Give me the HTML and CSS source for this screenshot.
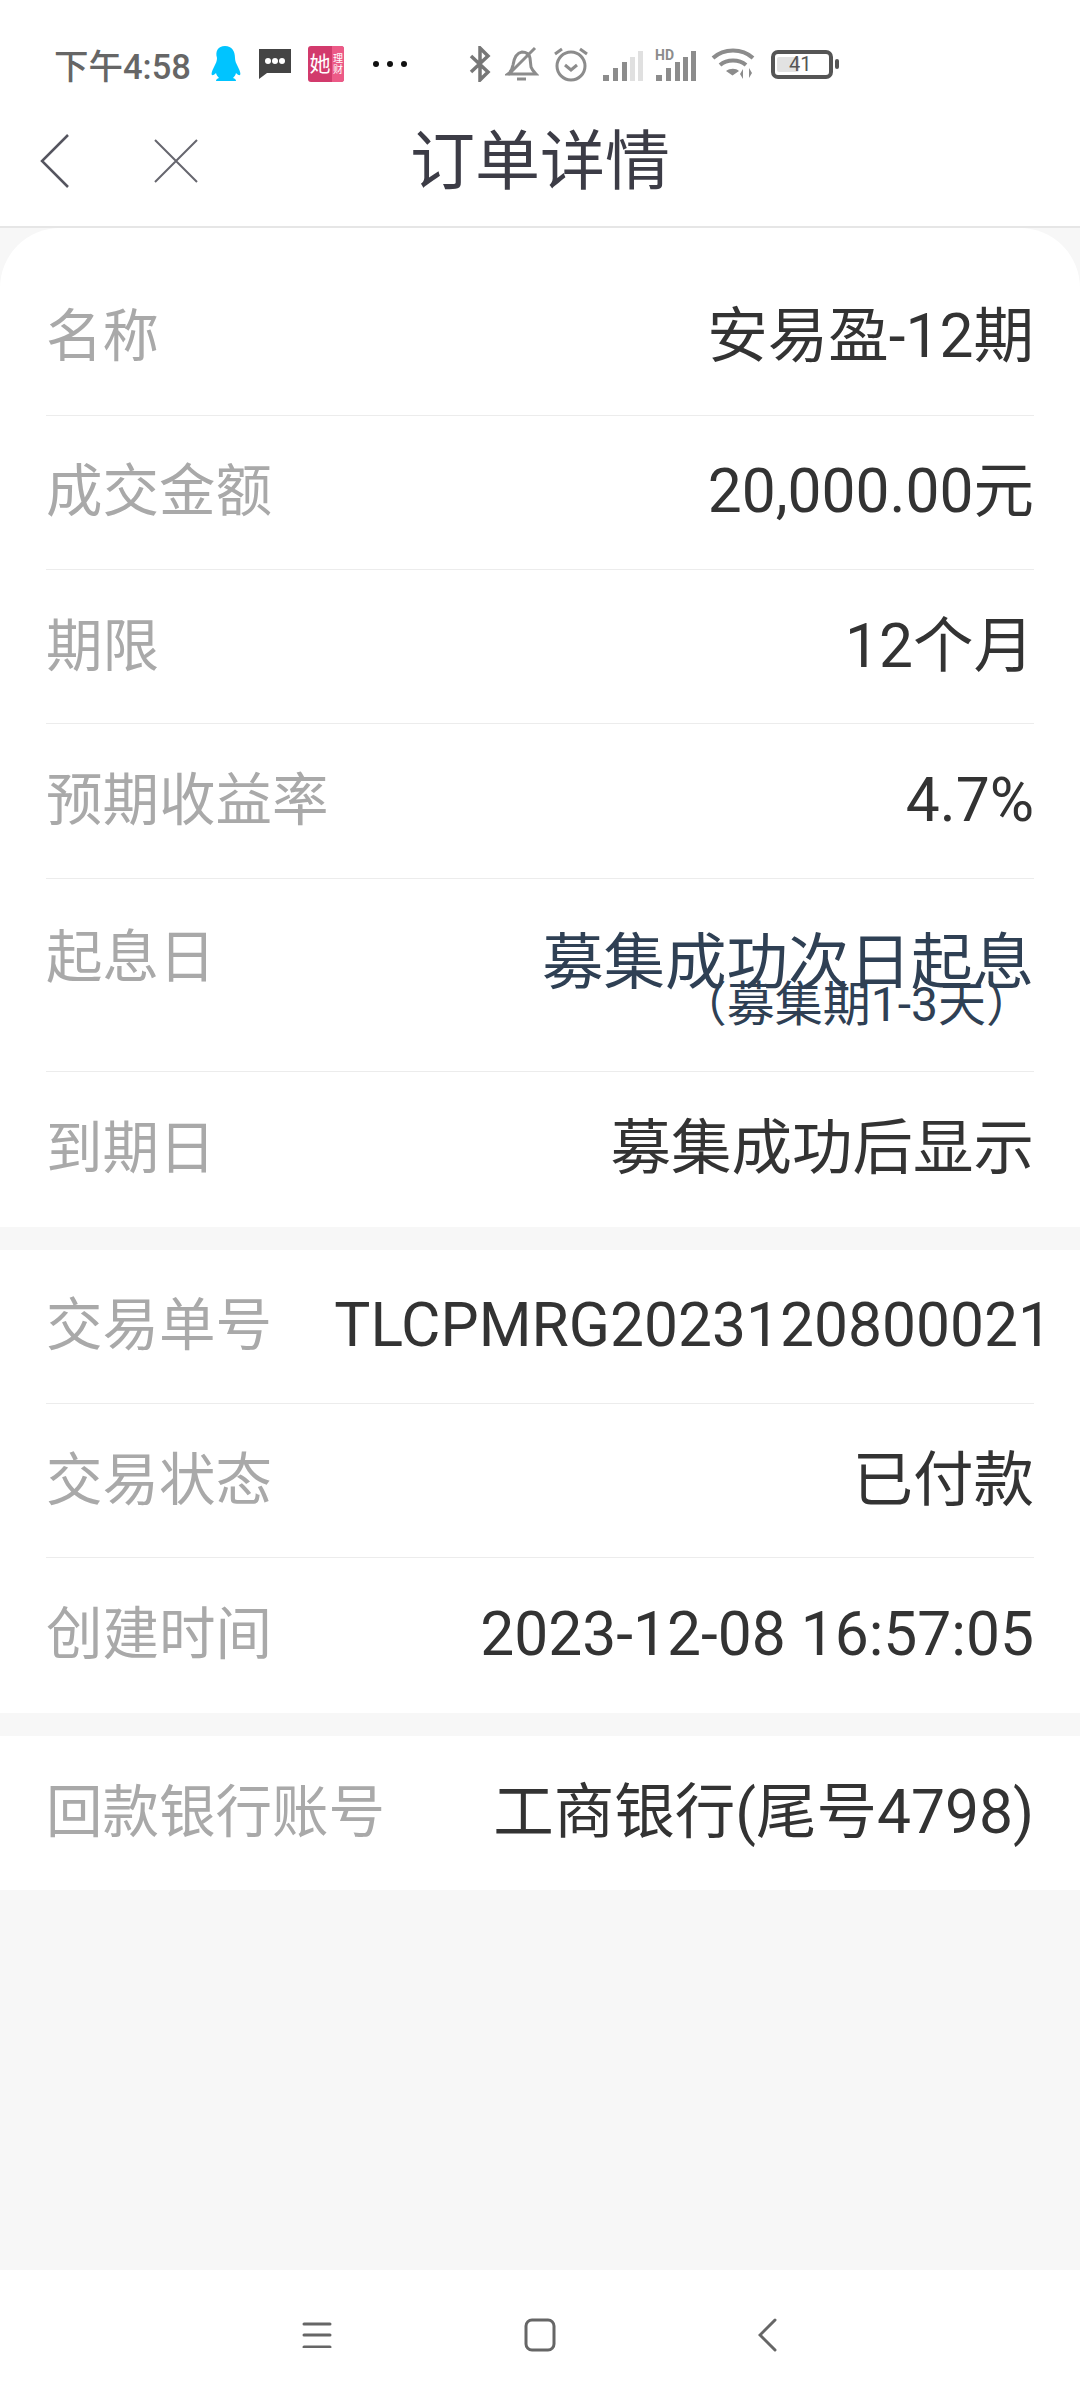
FILE: index.html
```html
<!DOCTYPE html>
<html lang="zh-CN">
<head>
<meta charset="utf-8">
<title>订单详情</title>
<link rel="stylesheet" href="styles.css">
</head>
<body>
<div class="screen">
  <header class="top">
    <div class="status">
      <span class="clock">下午4:58</span>
      <svg class="ic ic-qq" width="32" height="38" viewBox="0 0 32 38"><path fill="#00c4ff" d="M16 1c7 0 10 5 10 12 0 3 1 5 3 9 2 4 3 7 2 8-1 .6-3-1-4-2-.5 2-1.500 3.500-3 5 2 .5 3 1.500 3 3H7c0-1.500 1-2.500 3-3-1.500-1.500-2.500-3-3-5-1 1-3 2.600-4 2-1-1 0-4 2-8 2-4 3-6 3-9C6 6 9 1 16 1z"/></svg>
      <svg class="ic ic-msg" width="34" height="32" viewBox="0 0 34 32"><path fill="#444" d="M1 1h32v24H9l-8 6z"/><circle cx="10" cy="13" r="3" fill="#fff"/><circle cx="17" cy="13" r="3" fill="#fff"/><circle cx="24" cy="13" r="3" fill="#fff"/></svg>
      <span class="ic-she"><span class="she-a">她</span><span class="she-b">理<br>财</span></span>
      <span class="dots"><i></i><i></i><i></i></span>
      <svg class="ic ic-bt" width="22" height="36" viewBox="0 0 22 36"><path fill="none" stroke="#777" stroke-width="3.500" d="M2 10l17 16-8 8V2l8 8L2 26"/></svg>
      <svg class="ic ic-bell" width="34" height="36" viewBox="0 0 34 36"><path fill="none" stroke="#8c8c8c" stroke-width="3" d="M3 28c3-2 4-4 5-9 1-7 3-12 9-13 4 0 7 2 8 6l1 9c1 3 3 5 5 7zM3 29L30 2M12 33h9"/></svg>
      <svg class="ic ic-alarm" width="36" height="36" viewBox="0 0 36 36"><g fill="none" stroke="#8c8c8c" stroke-width="3"><circle cx="18" cy="20" r="14"/><path d="M12 19l6 5 6-5M2 8l7-5M34 8l-7-5"/></g></svg>
      <svg class="ic ic-sig1" width="40" height="30" viewBox="0 0 40 30"><rect x="0" y="24" width="6" height="6" fill="#8c8c8c"/><rect x="10" y="17" width="5" height="13" fill="#8c8c8c"/><rect x="19" y="11" width="5" height="19" fill="#8c8c8c"/><rect x="27" y="6" width="5" height="24" fill="#e0e0e0"/><rect x="35" y="0" width="5" height="30" fill="#e0e0e0"/></svg>
      <span class="sig2"><span class="hd">HD</span><svg width="40" height="30" viewBox="0 0 40 30"><rect x="0" y="24" width="6" height="6" fill="#8c8c8c"/><rect x="10" y="17" width="5" height="13" fill="#8c8c8c"/><rect x="19" y="11" width="5" height="19" fill="#8c8c8c"/><rect x="27" y="6" width="5" height="24" fill="#8c8c8c"/><rect x="35" y="0" width="5" height="30" fill="#8c8c8c"/></svg></span>
      <svg class="ic ic-wifi" width="44" height="34" viewBox="0 0 44 34"><g fill="none" stroke="#8c8c8c" stroke-width="4"><path d="M2 11c11-10 29-10 40 0M9 18c7-6 19-6 26 0"/></g><path fill="#8c8c8c" d="M15 24c4-3 10-3 13 0l-6.500 4.500zM32 32V22l-3 5zM38 21v10l3-5z"/></svg>
      <span class="battery"><span class="level"></span><span class="num">41</span></span><span class="nub"></span>
    </div>
    <div class="titlebar">
      <svg class="back" width="30" height="54" viewBox="0 0 30 54"><path fill="none" stroke="#55555f" stroke-width="2.500" d="M28 1L2 27l26 26"/></svg>
      <svg class="close" width="44" height="44" viewBox="0 0 44 44"><path fill="none" stroke="#66666e" stroke-width="2" d="M1 1l42 42M43 1L1 43"/></svg>
      <h1 class="title">订单详情</h1>
    </div>
  </header>

  <main class="content">
    <section class="card first">
      <div class="row"><span class="k">名称</span><span class="v">安易盈-12期</span></div>
      <div class="row"><span class="k">成交金额</span><span class="v">20,000.00元</span></div>
      <div class="row"><span class="k">期限</span><span class="v">12个月</span></div>
      <div class="row"><span class="k">预期收益率</span><span class="v">4.7%</span></div>
      <div class="row tall"><span class="k">起息日</span><span class="v stack"><span class="main">募集成功次日起息</span><span class="sub">（募集期1-3天）</span></span></div>
      <div class="row"><span class="k">到期日</span><span class="v">募集成功后显示</span></div>
    </section>
    <section class="card">
      <div class="row"><span class="k">交易单号</span><span class="v over">TLCPMRG2023120800021</span></div>
      <div class="row"><span class="k">交易状态</span><span class="v">已付款</span></div>
      <div class="row"><span class="k">创建时间</span><span class="v">2023-12-08 16:57:05</span></div>
    </section>
    <section class="card">
      <div class="row"><span class="k">回款银行账号</span><span class="v">工商银行(尾号4798)</span></div>
    </section>
  </main>

  <nav class="navbar">
    <svg width="30" height="26" viewBox="0 0 30 26"><path stroke="#666" stroke-width="3" stroke-linecap="round" d="M2 2h26M2 13h26M2 25h26"/></svg>
    <svg width="32" height="34" viewBox="0 0 32 34"><rect x="2" y="2" width="28" height="30" rx="6" fill="none" stroke="#666" stroke-width="3"/></svg>
    <svg class="nav-back" width="20" height="34" viewBox="0 0 20 34"><path fill="none" stroke="#666" stroke-width="3" stroke-linecap="round" d="M17 2L2 17l15 15"/></svg>
  </nav>
</div>
</body>
</html>
```
FILE: styles.css
```css
* { box-sizing: border-box; }
html, body { margin: 0; padding: 0; }
body { font-family: Roboto, "Noto Sans CJK SC", sans-serif; background: #f7f7f7; }
.screen { width: 1080px; height: 2400px; display: flex; flex-direction: column; overflow: hidden; background: #f7f7f7; }

.top { background: #fff; height: 228px; border-bottom: 2px solid #e6e6e6; flex: none; }
.status { height: 96px; padding: 32px 0 0 54px; display: flex; align-items: center; }
.clock { font-size: 34.500px; font-weight: 500; color: #666; width: 155px; white-space: nowrap; }
.ic { flex: none; display: block; }
.ic-msg { margin-left: 17px; }
.ic-she { margin-left: 16px; width: 36px; height: 36px; border-radius: 3px; background: #d23a6c; color: #fff; display: flex; align-items: center; overflow: hidden; flex: none; }
.she-a { font-size: 21px; line-height: 36px; width: 24px; text-align: center; }
.she-b { font-size: 10px; line-height: 11px; flex: 1; background: #ec5a87; height: 36px; padding-top: 7px; text-align: center; }
.dots { margin-left: 29px; display: flex; gap: 8px; flex: none; }
.dots i { width: 6px; height: 6px; border-radius: 50%; background: #111; display: block; }
.ic-bt { margin-left: 62px; }
.ic-bell { margin-left: 14px; }
.ic-alarm { margin-left: 14px; }
.ic-sig1 { margin-left: 14px; margin-top: 4px; }
.sig2 { margin-left: 13px; position: relative; display: block; width: 40px; height: 30px; margin-top: 4px; flex: none; }
.sig2 svg { display: block; }
.hd { position: absolute; left: -1px; top: -2px; font-size: 14px; font-weight: 700; color: #8c8c8c; line-height: 12px; }
.ic-wifi { margin-left: 15px; }
.battery { margin-left: 16px; width: 62px; height: 29px; border: 4px solid #555; border-radius: 7px; position: relative; display: block; flex: none; }
.level { position: absolute; left: 2px; top: 3px; bottom: 3px; width: 22px; background: #e2e2e2; border-radius: 2px; }
.num { position: absolute; left: 14px; top: -2px; font-size: 20px; line-height: 25px; color: #555; }
.nub { width: 4px; height: 10px; border-radius: 2px; background: #555; margin-left: 2px; flex: none; }

.titlebar { height: 130px; position: relative; display: flex; align-items: center; justify-content: center; padding-top: 2px; }
.title { margin: 0; font-size: 65px; font-weight: 400; color: #3c3c46; line-height: 84px; }
.back { position: absolute; left: 40px; top: 38px; }
.close { position: absolute; left: 154px; top: 43px; }

.content { flex: 1; display: flex; flex-direction: column; gap: 23px; }
.card { background: #fff; padding: 0 46px; }
.card.first { border-radius: 60px 60px 0 0; padding-top: 33.500px; }
.row { height: 154.330px; display: flex; justify-content: space-between; align-items: center; border-bottom: 1px solid #ececec; }
.row:last-child { border-bottom: 0; }
.first .row:first-child { padding-bottom: 2px; }
.row.tall { height: 193.500px; align-items: flex-start; }
.k { font-size: 56.500px; line-height: 80px; color: #a9a9a9; white-space: nowrap; flex: none; }
.tall .k { line-height: 66px; margin-top: 46px; }
.v { font-size: 60.500px; line-height: 80px; color: #333; white-space: nowrap; }
.v.over { margin-right: -18px; }
.stack { display: flex; flex-direction: column; align-items: flex-end; color: #2f4054; margin-top: 51px; }
.main { font-size: 61.500px; line-height: 66px; }
.sub { font-size: 48px; line-height: 50px; margin-top: -16px; }

.navbar { height: 130px; background: #fff; flex: none; display: flex; align-items: center; padding: 0 0 0 302px; gap: 192px; }
.nav-back { margin-left: 10px; }
```
